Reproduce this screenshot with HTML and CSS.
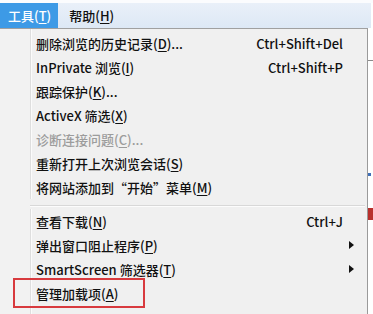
FILE: index.html
```html
<!DOCTYPE html>
<html lang="zh-CN">
<head>
<meta charset="utf-8">
<title>工具菜单</title>
<link rel="stylesheet" href="styles.css">
</head>
<body>
<div class="screen">
  <div class="topstrip"></div>
  <div class="menubar">
    <span class="mb-item active">工具(<u>T</u>)</span>
    <span class="mb-item">帮助(<u>H</u>)</span>
  </div>
  <div class="page">
    <div class="dropdown">
      <ul class="menu">
        <li class="item"><span class="label">删除浏览的历史记录(<u>D</u>)...</span><span class="key">Ctrl+Shift+Del</span><span class="sub"></span></li>
        <li class="item"><span class="label">InPrivate 浏览(<u>I</u>)</span><span class="key">Ctrl+Shift+P</span><span class="sub"></span></li>
        <li class="item"><span class="label">跟踪保护(<u>K</u>)...</span><span class="key"></span><span class="sub"></span></li>
        <li class="item"><span class="label">ActiveX 筛选(<u>X</u>)</span><span class="key"></span><span class="sub"></span></li>
        <li class="item disabled"><span class="label">诊断连接问题(<u>C</u>)...</span><span class="key"></span><span class="sub"></span></li>
        <li class="item"><span class="label">重新打开上次浏览会话(<u>S</u>)</span><span class="key"></span><span class="sub"></span></li>
        <li class="item"><span class="label">将网站添加到“开始”菜单(<u>M</u>)</span><span class="key"></span><span class="sub"></span></li>
        <li class="separator"></li>
        <li class="item"><span class="label">查看下载(<u>N</u>)</span><span class="key">Ctrl+J</span><span class="sub"></span></li>
        <li class="item"><span class="label">弹出窗口阻止程序(<u>P</u>)</span><span class="key"></span><span class="sub"><i class="arrow"></i></span></li>
        <li class="item"><span class="label">SmartScreen 筛选器(<u>T</u>)</span><span class="key"></span><span class="sub"><i class="arrow"></i></span></li>
        <li class="item highlight"><span class="label">管理加载项(<u>A</u>)</span><span class="key"></span><span class="sub"></span><span class="redbox"></span></li>
      </ul>
    </div>
    <div class="pageside">
      <div class="side-line"></div>
      <div class="side-dot"></div>
      <div class="side-red"></div>
    </div>
  </div>
</div>
</body>
</html>
```
FILE: styles.css
```css
html, body {
  margin: 0;
  padding: 0;
  background: #ffffff;
}

.screen {
  width: 373px;
  height: 314px;
  overflow: hidden;
  font-family: "Noto Sans CJK SC", "Noto Sans", sans-serif;
  font-size: 13px;
  font-weight: 500;
  color: #111111;
}

.topstrip {
  height: 3px;
  background: #fbfcfe;
}

.menubar {
  height: 25px;
  width: 371px;
  display: flex;
  align-items: stretch;
  background: linear-gradient(#e9f0f9, #dde8f5);
}

.mb-item {
  display: flex;
  align-items: center;
  padding: 0 9px 0 11px;
  line-height: 1;
  white-space: nowrap;
}

.mb-item.active {
  background: #3d9ae6;
  color: #ffffff;
  padding: 0 7px 0 8px;
}

.page {
  display: flex;
  align-items: flex-start;
}

.dropdown {
  width: 367px;
  height: 300px;
  border-top: 1px solid #a0a0a0;
  border-right: 1px solid #9a9a9a;
  background: linear-gradient(to right, #f2f2f2 0, #f2f2f2 30px, #dedede 30px, #dedede 31px, #fbfbfb 31px, #fbfbfb 32px, #f0f0f0 32px);
  flex: none;
}

.menu {
  list-style: none;
  margin: 0;
  padding: 2px 0 0 0;
}

.item {
  position: relative;
  display: flex;
  align-items: center;
  height: 24px;
  padding: 0 11px 0 36px;
  white-space: nowrap;
  line-height: 1;
}

.item .label {
  flex: 1;
}

.item .key {
  text-align: right;
}

.item .sub {
  width: 13px;
  display: flex;
  justify-content: flex-end;
  align-items: center;
}

.arrow {
  display: block;
  width: 0;
  height: 0;
  margin-right: 2px;
  border-top: 4px solid transparent;
  border-bottom: 4px solid transparent;
  border-left: 5px solid #111111;
}

.item.disabled {
  color: #9c9c9c;
}

u {
  text-decoration: underline;
  text-underline-offset: 2px;
}

.separator {
  height: 10px;
  margin-left: 30px;
  margin-right: 2px;
  background: linear-gradient(#f0f0f0 0, #f0f0f0 6px, #d8d8d8 6px, #d8d8d8 7px, #fcfcfc 7px, #fcfcfc 8px, #f0f0f0 8px);
}

.redbox {
  position: absolute;
  left: 13px;
  top: -3px;
  width: 128px;
  height: 26px;
  border: 2px solid #d83a3e;
}

.pageside {
  flex: 1;
  display: flex;
  flex-direction: column;
}

.side-line {
  margin-top: 32px;
  height: 1px;
  background: #8a8a8a;
}

.side-dot {
  margin-top: 112px;
  width: 3px;
  height: 3px;
  background: #3f6fb8;
}

.side-red {
  margin-top: 32px;
  width: 5px;
  height: 12px;
  background: #b8302c;
}
```
